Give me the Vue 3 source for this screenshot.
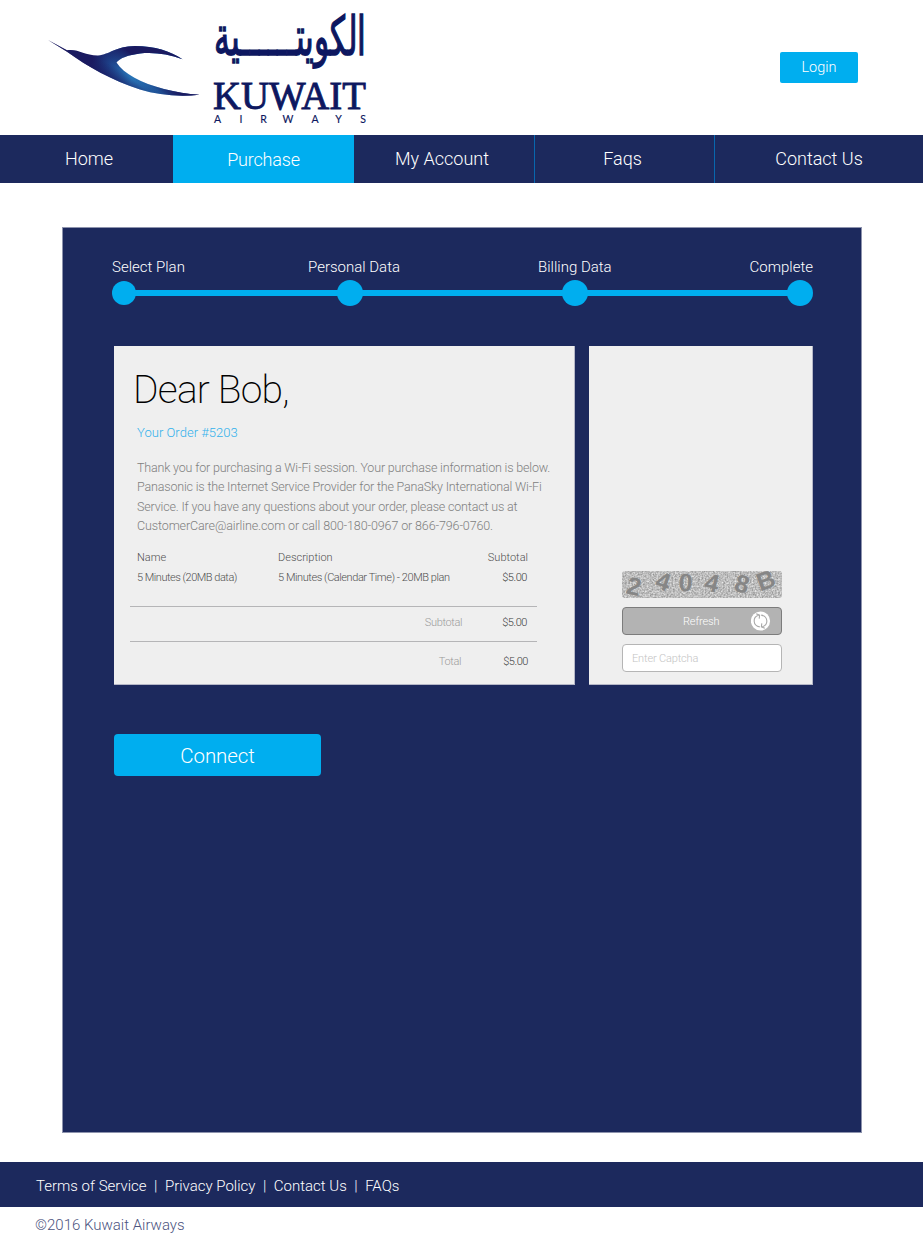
<script setup>
const nav = [
  { label: 'Home', key: 'home' },
  { label: 'Purchase', key: 'purchase', active: true },
  { label: 'My Account', key: 'account' },
  { label: 'Faqs', key: 'faqs' },
  { label: 'Contact Us', key: 'contact' },
]
const steps = ['Select Plan', 'Personal Data', 'Billing Data', 'Complete']
const paragraph = [
  'Thank you for purchasing a Wi-Fi session. Your purchase information is below.',
  'Panasonic is the Internet Service Provider for the PanaSky International Wi-Fi',
  'Service. If you have any questions about your order, please contact us at',
  'CustomerCare@airline.com or call 800-180-0967 or 866-796-0760.',
]
const captcha = [
  { c: '2', x: 12, y: 16, r: 14 },
  { c: '4', x: 41, y: 11, r: 18 },
  { c: '0', x: 63.5, y: 12, r: 3 },
  { c: '4', x: 90, y: 12.5, r: 14 },
  { c: '8', x: 120, y: 13.5, r: 16 },
  { c: 'B', x: 144, y: 10, r: -20 },
]
</script>

<template>
  <div class="page">
    <header class="header">
      <svg class="logo" width="330" height="135" viewBox="40 0 330 135">
        <defs>
          <linearGradient id="wing" gradientUnits="userSpaceOnUse" x1="92" y1="60" x2="196" y2="96">
            <stop offset="0" stop-color="#1a1a60" />
            <stop offset=".16" stop-color="#1d4088" />
            <stop offset=".4" stop-color="#2a80c2" />
            <stop offset=".65" stop-color="#2474b8" />
            <stop offset="1" stop-color="#1b2a70" />
          </linearGradient>
          <linearGradient id="upper" gradientUnits="userSpaceOnUse" x1="116" y1="66" x2="132" y2="46">
            <stop offset="0" stop-color="#1a1a60" stop-opacity="0" />
            <stop offset=".75" stop-color="#1a1a60" />
          </linearGradient>
          <linearGradient id="belly" gradientUnits="userSpaceOnUse" x1="137" y1="79" x2="131" y2="90">
            <stop offset="0" stop-color="#1a1a60" stop-opacity="0" />
            <stop offset="1" stop-color="#1a1a60" stop-opacity=".8" />
          </linearGradient>
          <path id="bird" d="M48 40 L67 50.300 C78 48.500 84 55.500 98 55.400 C110 54.500 115 46.500 135 46 C155 46 170 51 182.500 59.300 C168 54 154 52 140 53.500 C128 55 120 58 116.500 62.500 C124 74 141 83 164 89 C176 92 187 94.300 199.500 94.800 C178 97 158 95 140 89.500 C111 80 88 67 67 51.800 Z" />
        </defs>
        <use href="#bird" fill="url(#wing)" />
        <use href="#bird" fill="url(#upper)" />
        <use href="#bird" fill="url(#belly)" />
        <g fill="#0d1760" stroke="#0d1760">
          <text class="arabic" direction="rtl" x="366" y="55" font-size="54" stroke-width="1.500" textLength="152" lengthAdjust="spacingAndGlyphs">الكويتــــــية</text>
          <text class="serif" x="213" y="108.500" font-size="41" stroke-width=".9" textLength="153" lengthAdjust="spacingAndGlyphs">KUWAIT</text>
          <g class="airways" stroke-width=".15">
            <text v-for="(c, i) in 'AIRWAYS'" :key="i" :x="[217.5, 241, 263.5, 288, 315, 338.500, 363][i]" y="123" text-anchor="middle">{{ c }}</text>
          </g>
        </g>
      </svg>
      <button class="login">Login</button>
    </header>

    <nav class="nav">
      <a v-for="n in nav" :key="n.key" :class="['nav-item', n.key, { active: n.active }]"><span>{{ n.label }}</span></a>
    </nav>

    <main class="panel">
      <div class="labels">
        <span v-for="(s, i) in steps" :key="s" :class="'l' + i">{{ s }}</span>
      </div>
      <div class="track">
        <i v-for="(s, i) in steps" :key="s" :class="['dot', { small: i === 0 }]"></i>
      </div>

      <div class="cards">
        <section class="card order">
          <h1>Dear Bob,</h1>
          <p class="number">Your Order #5203</p>
          <div class="message">
            <p v-for="(line, i) in paragraph" :key="i" :class="'m' + i">{{ line }}</p>
          </div>
          <div class="items">
            <span>Name</span><span>Description</span><span class="sub">Subtotal</span>
            <span class="plan">5 Minutes (20MB data)</span><span class="detail">5 Minutes (Calendar Time) - 20MB plan</span><span class="price">$5.00</span>
          </div>
          <div class="sum first"><span class="name">Subtotal</span><span class="price">$5.00</span></div>
          <div class="sum total"><span class="name">Total</span><span class="price">$5.00</span></div>
        </section>

        <section class="card verify">
          <svg class="captcha" width="160" height="27" viewBox="0 0 160 27">
            <defs>
              <filter id="noise" x="0" y="0" width="100%" height="100%" color-interpolation-filters="sRGB">
                <feTurbulence type="fractalNoise" baseFrequency=".6" numOctaves="2" seed="8" />
                <feColorMatrix values=".5 0 0 0 .49  .5 0 0 0 .49  .5 0 0 0 .49  0 0 0 0 1" />
              </filter>
              <clipPath id="round"><rect width="160" height="27" rx="3" /></clipPath>
            </defs>
            <g clip-path="url(#round)">
              <rect width="160" height="27" filter="url(#noise)" />
            </g>
            <text v-for="(g, i) in captcha" :key="i" class="glyph" :transform="`translate(${g.x} ${g.y}) rotate(${g.r})`" text-anchor="middle" y="8">{{ g.c }}</text>
          </svg>
          <button class="refresh">
            <span>Refresh</span>
            <svg width="20" height="20" viewBox="0 0 20 20">
              <circle cx="9.500" cy="10" r="9.600" fill="#fff" />
              <g fill="none" stroke="#a8a8a8" stroke-width="1.100">
                <path d="M8.800 15.900 C1.500 14.500 1.500 6 7.600 4.300 M5.200 2.700 L8.600 4.200 L8.200 7.600" />
                <path d="M10.200 4.100 C17.500 5.500 17.500 14 11.400 15.700 M13.800 17.300 L10.400 15.800 L10.800 12.400" />
              </g>
            </svg>
          </button>
          <input class="entry" placeholder="Enter Captcha" />
        </section>
      </div>

      <button class="connect">Connect</button>
    </main>

    <footer class="footer">
      <span>Terms of Service</span><b>|</b><span>Privacy Policy</span><b>|</b><span>Contact Us</span><b>|</b><span>FAQs</span>
    </footer>
    <div class="copyright">©2016 Kuwait Airways</div>
  </div>
</template>

<style>
body { margin: 0; background: #fff; }
</style>

<style scoped>
* { box-sizing: border-box; }
.page { width: 923px; height: 1243px; background: #fff; font-family: Roboto, "Liberation Sans", sans-serif; font-weight: 300; overflow: hidden; }
button { font-family: inherit; font-weight: 300; padding: 0; border: 0; color: #fff; background: #00aeef; }
h1, p { margin: 0; font-weight: 300; }
.header { height: 135px; display: flex; justify-content: space-between; padding: 0 65px 0 40px; }
.logo { display: block; }
.arabic { font-family: "DejaVu Sans", sans-serif; }
.serif { font-family: "Liberation Serif", serif; }
.airways { font-family: Lato, sans-serif; font-size: 10.5px; font-weight: 400; }
.login { width: 78px; height: 31px; margin-top: 52px; border-radius: 2px; font-size: 14.5px; line-height: 31px; }
.nav { height: 48px; display: grid; grid-template-columns: 173px 181px 181px 180px 208px; grid-template-rows: 48px; background: #1c295d; color: #fff; font-size: 18px; line-height: 48px; text-align: center; }
.nav-item { white-space: nowrap; height: 48px; }
.home { padding-left: 5px; }
.active { background: #00aeef; line-height: 50px; letter-spacing: -.2px; }
.account { padding-right: 4px; border-right: 1px solid #0867ad; }
.faqs { padding-right: 4px; border-right: 1px solid #0867ad; }
.panel { width: 800px; height: 906px; margin: 44px 0 0 62px; padding: 30px 48px 0 49px; background: #1c295d; border: 1px solid #8d93ad; }
.labels { display: grid; grid-template-columns: 196px 230px 1fr auto; height: 19px; line-height: 19px; font-size: 15px; color: #fff; white-space: nowrap; }
.track { height: 26px; margin-top: 3px; display: flex; justify-content: space-between; align-items: center; background: linear-gradient(#00aeef, #00aeef) 10px 10px / 680px 6px no-repeat; }
.dot { width: 26px; height: 26px; border-radius: 50%; background: #00aeef; }
.dot.small { width: 24px; height: 24px; margin-right: 2px; }
.cards { display: flex; gap: 14px; margin: 40px 0 0 2px; }
.card { height: 339px; background: #efefef; border: solid #b5b7c7; border-width: 0 1px 1px 0; }
.order { width: 461px; padding: 20px 20px 0 16px; }
h1 { height: 46px; line-height: 48px; margin-left: 3px; font-size: 39px; font-weight: 200; letter-spacing: -.75px; color: #000; white-space: nowrap; }
.number { margin: 11px 0 0 7px; height: 20px; line-height: 20px; font-size: 13px; letter-spacing: .03px; color: #32b1ec; }
.message { margin: 15px 0 0 7px; font-size: 12.5px; line-height: 19.4px; letter-spacing: -.17px; color: #808080; white-space: nowrap; }
.m3 { letter-spacing: -.12px; }
.items { display: grid; grid-template-columns: 141px 1fr auto; width: 391px; margin: 12px 0 0 7px; line-height: 20px; font-size: 11px; color: #505050; white-space: nowrap; }
.plan { letter-spacing: -.48px; }
.detail { letter-spacing: -.43px; }
.price { text-align: right; padding-right: 1px; letter-spacing: -.45px; color: #404040; }
.sum { width: 407px; display: flex; justify-content: flex-end; border-top: 1px solid #b5b5b7; font-size: 11px; color: #606060; }
.first { margin-top: 18px; height: 35px; line-height: 31px; padding-right: 9px; }
.total { height: 43px; line-height: 39px; padding-right: 8px; }
.sum .name { width: 80px; text-align: right; margin-right: 40px; color: #9b9b9b; letter-spacing: -.35px; }
.total .name { margin-right: 42px; }
.verify { width: 224px; padding: 225px 0 0 33px; }
.captcha { display: block; overflow: visible; }
.glyph { font: bold 25px "Liberation Sans", sans-serif; fill: #868686; }
.refresh { display: flex; align-items: center; width: 160px; height: 28px; margin-top: 9px; padding: 0 10px 0 60px; justify-content: space-between; border: 1px solid #7c7c7c; border-radius: 4px; background: #b3b3b3; font-size: 11px; letter-spacing: -.12px; }
.entry { display: block; width: 160px; height: 28px; margin-top: 8.5px; padding: 1px 9px 0; border: 1px solid #b5b5b5; border-radius: 4px; background: #fff; font: 300 11px Roboto, sans-serif; letter-spacing: -.15px; }
.entry::placeholder { color: #c4c4c4; opacity: 1; }
.connect { display: block; width: 207px; height: 42px; margin: 49px 0 0 2px; padding: 2px 0 0; border-radius: 4px; font-size: 20.5px; letter-spacing: -.1px; line-height: 40px; }
.footer { height: 45px; margin-top: 29px; padding: 1px 0 0 36px; display: flex; line-height: 46px; font-size: 15px; color: #fff; background: #1c295d; white-space: nowrap; }
.footer b { font-weight: 300; width: 18.4px; text-align: center; }
.copyright { height: 36px; padding-left: 35px; line-height: 36px; font-size: 15px; color: #4b5380; }
</style>
